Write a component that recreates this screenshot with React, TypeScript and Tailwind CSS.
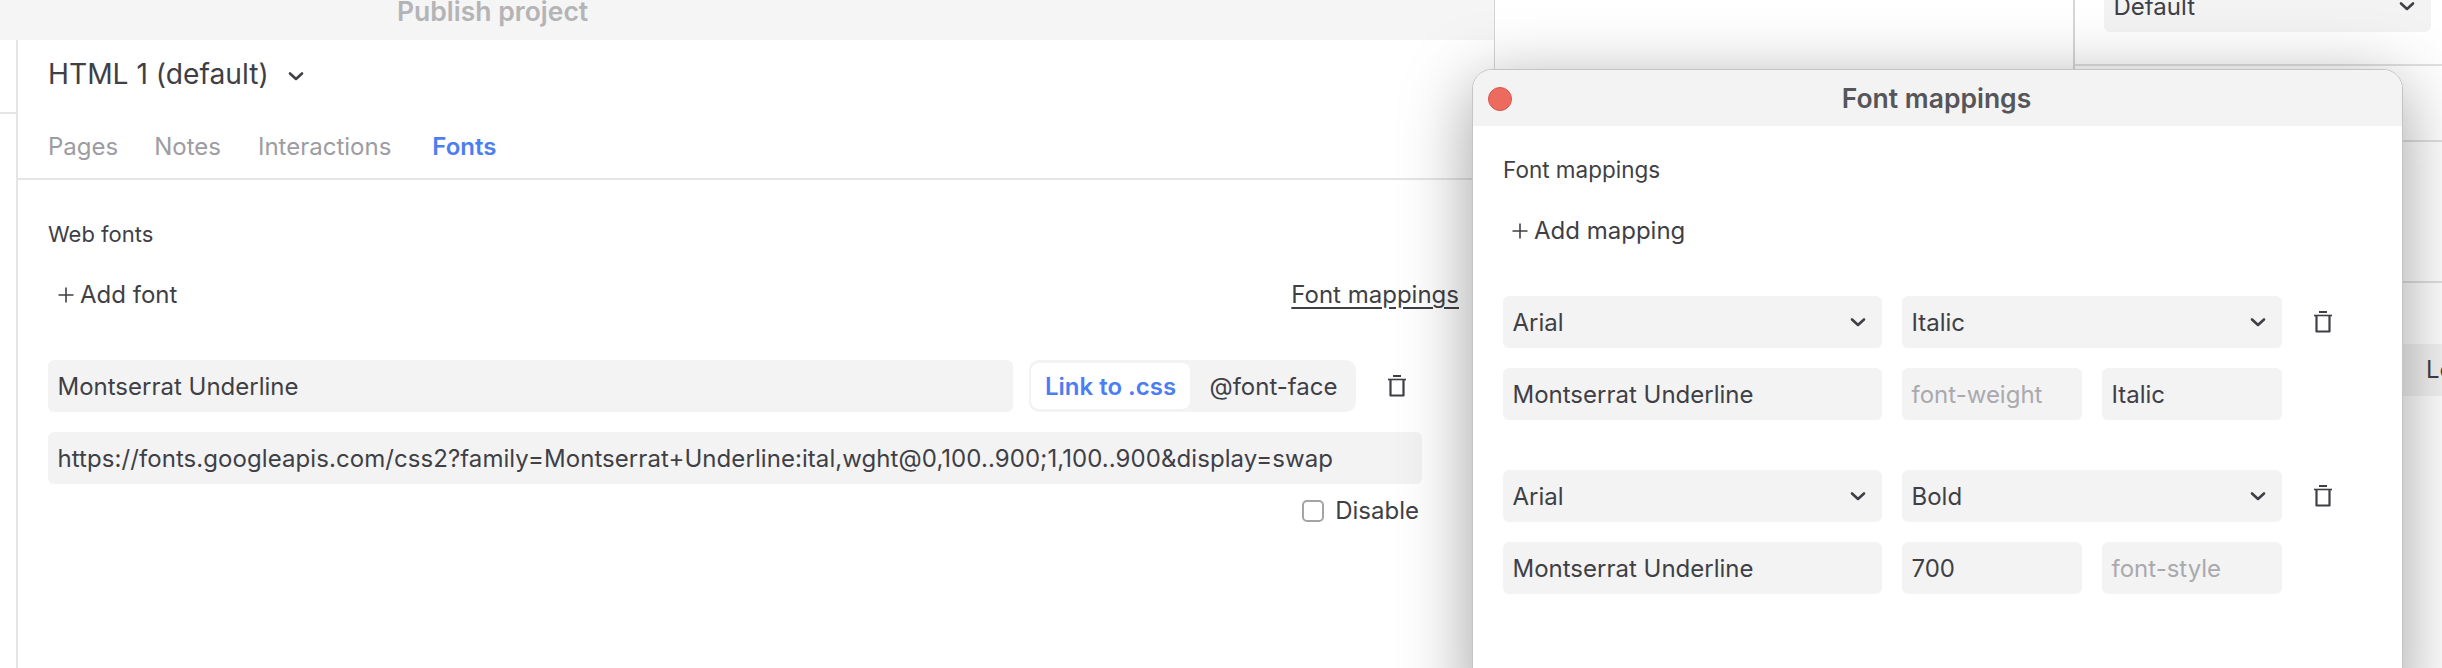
import React from 'react';

const Chevron = ({ className = '' }: { className?: string }) => (
  <svg width="16" height="11" viewBox="0 0 16 11" fill="none" className={className}>
    <path d="M2 2.5L8 8L14 2.5" stroke="#3f3f46" strokeWidth="2.6" strokeLinecap="round" strokeLinejoin="round" />
  </svg>
);

const Plus = () => (
  <svg width="16" height="16" viewBox="0 0 16 16" fill="none">
    <path d="M8 0.5V15.5M0.5 8H15.5" stroke="#3f3f46" strokeWidth="1.6" />
  </svg>
);

const Trash = () => (
  <svg width="18" height="22" viewBox="0 0 18 22" fill="none">
    <path d="M5 1H13" stroke="#3f3f46" strokeWidth="2" />
    <path d="M0 4.5H18" stroke="#3f3f46" strokeWidth="1.6" />
    <path d="M2.5 4.5V20.5H15.5V4.5" stroke="#3f3f46" strokeWidth="2.2" strokeLinejoin="round" />
  </svg>
);

function Field({ children, muted, className = '' }: { children: React.ReactNode; muted?: boolean; className?: string }) {
  return (
    <div className={`h-[52px] bg-[#f3f3f3] rounded-md pl-[9.5px] pt-[2px] flex items-center whitespace-nowrap ${muted ? 'text-[#a9a9ae]' : ''} ${className}`}>
      {children}
    </div>
  );
}

function SelectField({ label, className = '' }: { label: string; className?: string }) {
  return (
    <Field className={`justify-between pr-4 ${className}`}>
      <span>{label}</span>
      <Chevron className="-mt-[2px]" />
    </Field>
  );
}

function MappingRow({ style, weight, fontStyle }: { style: string; weight?: string; fontStyle?: string }) {
  return (
    <div className="grid grid-cols-[379px_180px_180px_42px] gap-5">
      <SelectField label="Arial" />
      <SelectField label={style} className="col-span-2" />
      <div className="flex items-center justify-center">
        <Trash />
      </div>
      <Field>Montserrat Underline</Field>
      <Field muted={!weight}>{weight || 'font-weight'}</Field>
      <Field muted={!fontStyle}>{fontStyle || 'font-style'}</Field>
    </div>
  );
}

function FontMappingsModal() {
  return (
    <div className="absolute left-[1472px] top-[69px] w-[931px] h-[640px] bg-white rounded-t-[20px] border border-[#c4c4c4] shadow-[0_16px_70px_rgba(0,0,0,0.38)] overflow-hidden">
      <div className="relative h-[56px] pr-[2px] bg-[#f3f3f3] flex items-center justify-center">
        <div className="absolute left-[15px] top-[17px] w-6 h-6 rounded-full bg-[#ec6a5e] border border-[#d9564b]" />
        <span className="text-[26.5px] font-semibold text-[#55555a]">Font mappings</span>
      </div>
      <div className="pl-[30px] pt-[29px]">
        <div className="leading-[30px] text-[22.5px]">Font mappings</div>
        <div className="mt-[31px] h-[30px] pl-[9px] flex items-center gap-[6px]">
          <Plus />
          <span>Add mapping</span>
        </div>
        <div className="mt-[50px] flex flex-col gap-[50px]">
          <MappingRow style="Italic" fontStyle="Italic" />
          <MappingRow style="Bold" weight="700" />
        </div>
      </div>
    </div>
  );
}

export default function App() {
  return (
    <div className="relative w-[2442px] h-[668px] overflow-hidden bg-white flex font-['Inter',sans-serif] text-[24px] leading-[30px] text-[#3f3f46]">
      {/* publish window */}
      <div className="w-[1495px] shrink-0 flex flex-col border-r border-[#d4d4d4]">
        <div className="h-10 shrink-0 bg-[#f5f5f5] pl-[397px] text-[26.5px] font-semibold text-[#b4b4b6]">
          <div className="-mt-[4px]">Publish project</div>
        </div>
        <div className="flex-1 flex">
          <div className="w-[18px] shrink-0 border-r-2 border-[#e5e5e5]">
            <div className="h-[74px] border-b-2 border-[#e5e5e5]" />
          </div>
          <div className="flex-1 min-w-0">
            <div className="h-[68px] pl-[30px] flex items-center gap-[19px] text-[28.2px]">
              <span>HTML 1 (default)</span>
              <Chevron className="mt-1" />
            </div>
            <div className="h-[72px] pl-[30px] pt-6 flex gap-9 border-b-2 border-[#e5e5e5] text-[#9c9ca2]">
              <span>Pages</span>
              <span>Notes</span>
              <span className="ml-px">Interactions</span>
              <span className="ml-[5px] font-semibold text-[#4c7ef3]">Fonts</span>
            </div>
            <div className="pl-[30px] pr-[35px] pt-[39px]">
              <div className="text-[22px]">Web fonts</div>
              <div className="mt-[31px] flex justify-between items-center">
                <div className="pl-[10px] flex items-center gap-[6px]">
                  <Plus />
                  <span>Add font</span>
                </div>
                <span className="underline underline-offset-4">Font mappings</span>
              </div>
              <div className="mt-[50px] mr-[37px] flex flex-col gap-5">
                <div className="flex">
                  <Field className="flex-1">Montserrat Underline</Field>
                  <div className="ml-4 w-[327px] h-[52px] bg-[#f3f3f3] rounded-[10px] p-[3px] pl-[2px] flex items-center">
                    <div className="w-[159px] pt-[2px] h-[46px] bg-white rounded-lg flex items-center justify-center font-semibold text-[#4c7ef3]">Link to .css</div>
                    <div className="flex-1 pt-[2px] pl-1 text-center">@font-face</div>
                  </div>
                  <div className="w-[66px] pr-4 flex items-center justify-end">
                    <Trash />
                  </div>
                </div>
                <Field className="tracking-[0.07px]">https://fonts.googleapis.com/css2?family=Montserrat+Underline:ital,wght@0,100..900;1,100..900&amp;display=swap</Field>
              </div>
              <div className="mt-3 mr-[40px] flex justify-end items-center gap-[11px]">
                <div className="w-[22px] h-[22px] rounded-[5px] border-2 border-[#a3a3a8] bg-white" />
                <span>Disable</span>
              </div>
            </div>
          </div>
        </div>
      </div>

      {/* settings sidebar behind the dialog */}
      <div className="ml-[578px] flex-1 min-w-0 border-l-2 border-[#d6d6d6] flex flex-col">
        <div className="h-[66px] border-b-2 border-[#e0e0e0] pl-[29px] pr-[11px]">
          <div className="-mt-5">
            <SelectField label="Default" />
          </div>
        </div>
        <div className="h-[76px] border-b-2 border-[#e0e0e0]" />
        <div className="h-[141px] border-b-2 border-[#e0e0e0]" />
        <div className="mt-[61px] h-[52px] bg-[#f3f3f3] pl-[351px] flex items-center whitespace-nowrap">Lo</div>
      </div>

      <FontMappingsModal />
    </div>
  );
}
